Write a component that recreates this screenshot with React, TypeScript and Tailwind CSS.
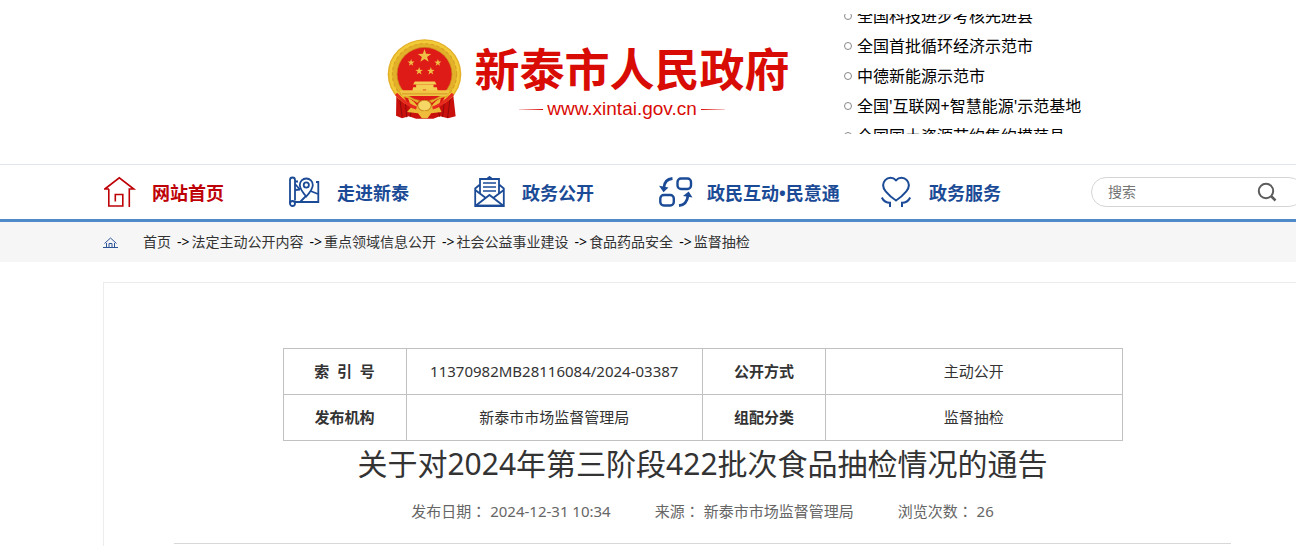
import type { ReactNode } from "react";

const honors = [
  "全国科技进步考核先进县",
  "全国首批循环经济示范市",
  "中德新能源示范市",
  "全国'互联网+智慧能源'示范基地",
  "全国国土资源节约集约模范县",
];

const crumbs = ["首页", "法定主动公开内容", "重点领域信息公开", "社会公益事业建设", "食品药品安全", "监督抽检"];

const meta = [
  { label: "发布日期", value: "2024-12-31 10:34" },
  { label: "来源", value: "新泰市市场监督管理局" },
  { label: "浏览次数", value: "26" },
];

function NavIcon({ children }: { children: ReactNode }) {
  return (
    <svg
      className="h-8 w-[34px] shrink-0"
      viewBox="0 0 34 32"
      fill="none"
      stroke="currentColor"
      strokeWidth="2"
      aria-hidden="true"
    >
      {children}
    </svg>
  );
}

const navItems = [
  {
    label: "网站首页",
    className: "w-[185px] text-[#be0007]",
    icon: (
      <g strokeWidth="1.6">
        <path d="M5 13H.8L15.3 1.8 29.8 13h-4.5v18" />
        <path d="M4.8 13v17h14V18.5h-7.5v7" />
      </g>
    ),
  },
  {
    label: "走进新泰",
    className: "w-[185px] text-[#1b4b96]",
    icon: (
      <g strokeWidth="1.8">
        <path d="M1 27.5V4a2.5 2.5 0 0 1 5 0v20.500M6 26h23.3V6H27M6 5.500h3" />
        <circle cx="3.5" cy="27.5" r="2.5" />
        <path d="M17.3 20.5c-4-4.500-6.500-8-6.500-11.500a6.500 6.500 0 0 1 13 0c0 3.500-2.500 7-6.500 11.500Z" />
        <circle cx="17.3" cy="9" r="2.6" />
        <path d="m6 8 5 5.500M6 14l5-.5M11.500 25.500l5.500-5.500M21.500 15l7.500 3" />
      </g>
    ),
  },
  {
    label: "政务公开",
    className: "w-[185px] text-[#1b4b96]",
    icon: (
      <g strokeWidth="1.8">
        <path d="M6 17V3h19v14M6 8.5 1.2 12.5V30h28.600V12.500L25 8.500M13.500 2.500l2-1.500 2 1.500" />
        <path d="m1.2 14 10 7.5M29.8 14l-10 7.500M2 29.500l13.500-10.500L29 29.500" />
        <path d="M9 7h13M9 11h13M9 15h13" strokeWidth="1.6" />
        <path d="M1 29.8h29" strokeWidth="2.4" />
      </g>
    ),
  },
  {
    label: "政民互动•民意通",
    className: "w-[222px] text-[#1b4b96]",
    icon: (
      <g strokeWidth="2.4">
        <rect x="18.5" y="2.5" width="13.5" height="10.5" rx="3.5" />
        <rect x="1.3" y="19" width="13.5" height="10.5" rx="3.5" />
        <path d="M13.5 2.500C8 3 5.200 6 4.800 12M20 29.700c5.500-.5 8.300-4 9-10" strokeWidth="2.8" />
        <path d="M0 9.800 9.500 11.500l-5 4.700ZM33.500 21.500 24 20l5.700-4.500Z" fill="currentColor" stroke="none" />
      </g>
    ),
  },
  {
    label: "政务服务",
    className: "w-[122px] text-[#1b4b96]",
    icon: (
      <g>
        <path d="M15 4.3C12 .8 7 1 4.200 4.200c-2.800 3.300-2.400 7.600.5 11.100C7.500 18.600 11 22 15 24.500c4-2.500 7.500-5.900 10.300-9.200 2.900-3.500 3.300-7.800.5-11.100C23 1 18 .8 15 4.300Z" />
        <path d="M.8 21.5c2 4 4.500 5.300 8.200 5.300V31M29.200 21.500c-2 4-4.500 5.300-8.200 5.300V31" />
      </g>
    ),
  },
];

function Star({ x, y, r }: { x: number; y: number; r: number }) {
  return (
    <path
      transform={`translate(${x} ${y}) scale(${r})`}
      d="M0-1 .23-.32.95-.31.37.12.59.81 0 .4-.59.81-.37.12-.95-.31-.23-.32Z"
      fill="#f0bf45"
    />
  );
}

function Emblem() {
  return (
    <svg className="h-[81px] w-[75px]" viewBox="21 28 224 242" aria-hidden="true">
      <path d="M49 187 81 210l104 0 33-23 8 72-23 6-24-6-20 7H108l-22-7-20 6-18-8Z" fill="#c9100d" />
      <path d="m58 198 8 62m9-51 5 53m130-60-8 62m-9-55-6 51M95 235l-5 25m82-25 6 25" stroke="#8f0b0b" strokeWidth="3" />
      <ellipse cx="133" cy="133" rx="110" ry="104" fill="#e3b02a" />
      <ellipse cx="133" cy="133" rx="101" ry="96" fill="none" stroke="#f2c936" strokeWidth="9" />
      <ellipse cx="133" cy="133" rx="96" ry="91" fill="none" stroke="#d59f24" strokeWidth="3" strokeDasharray="10 7" />
      <ellipse cx="133" cy="133" rx="82" ry="80" fill="#df1b18" stroke="#c98b1c" strokeWidth="2" />
      <Star x={133} y={79} r={21} />
      <Star x={93} y={99} r={11} />
      <Star x={173} y={99} r={11} />
      <Star x={117} y={124} r={12} />
      <Star x={152} y={124} r={12} />
      <path d="M104 155h60l5 9H99Zm4 10h52v7h-52Zm-9 7h71l3 15H96Z" fill="#f4ce52" />
      <path d="M128 187v-8h10v8" fill="#d42418" />
      <path d="M59 181h150l-8 17H66Z" fill="#f0c544" />
      <path d="M66 192h136" stroke="#c97b1a" strokeWidth="2" />
      <path d="M72 201q25 6 39 18 22-24 44 0 15-13 39-18l-16 30q-45 30-90 0Z" fill="#d91613" />
      <path d="M84 205q20 8 28 25 20-28 42 0 8-17 28-25l-6 25 8 16-31 4q-20 21-40 0l-32-4 12-14Z" fill="#ecba38" />
      <ellipse cx="133" cy="227" rx="20" ry="16" fill="#f6d665" stroke="#c98d1d" strokeWidth="3" />
      <path d="M48 192q32 34 61 42M218 192q-32 34-61 42" fill="none" stroke="#e72a1f" strokeWidth="9" />
      <path d="m115 251 18-9 19 9-10 14h-17Z" fill="#efbd3b" />
    </svg>
  );
}

function Header() {
  return (
    <header className="flex h-[164px] items-start pl-[387px]">
      <a href="#" className="flex pt-[39px] text-[#d90b05]">
        <Emblem />
        <div className="ml-3 flex w-[316px] flex-col items-center">
          <h1 className="whitespace-nowrap text-[45px] leading-[62px] font-bold">新泰市人民政府</h1>
          <div className="-mt-1 flex items-center gap-1 pr-5 font-['Liberation_Sans',sans-serif] text-[19px] leading-6">
            <span className="h-px w-6 bg-linear-to-r from-[#d90b05]/20 to-[#d90b05]" />
            www.xintai.gov.cn
            <span className="h-px w-6 bg-linear-to-l from-[#d90b05]/20 to-[#d90b05]" />
          </div>
        </div>
      </a>
      <div className="mt-3.5 ml-[54px] h-[120px] overflow-hidden">
        <ul className="-mt-[13px] text-base leading-[30px] text-black">
          {honors.map((item) => (
            <li key={item} className="flex items-center gap-[5px] whitespace-nowrap">
              <span className="size-2 rounded-full border border-[#888]" />
              {item}
            </li>
          ))}
        </ul>
      </div>
    </header>
  );
}

function Nav() {
  return (
    <nav className="border-t border-b-3 border-t-[#dfe6ee] border-b-[#4f89c8] pl-[104px]">
      <div className="-mr-2 flex h-[54px] items-center">
        {navItems.map((item) => (
          <a key={item.label} href="#" className={`flex shrink-0 items-center gap-3.5 ${item.className}`}>
            <NavIcon>{item.icon}</NavIcon>
            <span className="whitespace-nowrap pt-0.5 text-lg leading-7 font-bold">{item.label}</span>
          </a>
        ))}
        <form className="ml-auto flex h-[30px] w-[213px] shrink-0 items-center rounded-full border border-[#d5d5d5] pr-[26px] pl-4">
          <input
            type="text"
            aria-label="搜索"
            placeholder="搜索"
            className="min-w-0 flex-1 text-sm outline-none placeholder:text-[#757575]"
          />
          <button type="button" aria-label="提交搜索" className="text-[#5c5c5c]">
            <svg className="size-5" viewBox="0 0 20 20" fill="none" stroke="currentColor" strokeWidth="2">
              <circle cx="9" cy="9" r="7.2" />
              <path d="m14 14 4.5 4.5" strokeWidth="2.5" />
            </svg>
          </button>
        </form>
      </div>
    </nav>
  );
}

function Breadcrumb() {
  return (
    <div className="flex h-10 items-center bg-[#f6f6f6] pl-[103px] text-sm text-[#333]">
      <svg className="mr-[25px] h-[11px] w-[15px]" viewBox="0 0 15 11" fill="none" stroke="#2c5596" aria-hidden="true">
        <path d="M0 10.5h15M1.500 6.500 7.500 1l6 5.500M3.500 6v4.500m8 0V6M6 10.500v-4h3v4" />
      </svg>
      {crumbs.map((crumb, i) => (
        <span key={crumb} className="whitespace-nowrap">
          {i > 0 && <span className="pr-0.5 pl-1.5 text-black">-&gt;</span>}
          <a href="#">{crumb}</a>
        </span>
      ))}
    </div>
  );
}

function InfoTable() {
  const cell = "border border-[#c3c0c3] pb-0.5";
  return (
    <table className="mx-auto h-[93px] w-full max-w-[840px] table-fixed border-collapse text-center text-[15px] leading-6">
      <colgroup>
        <col className="w-[123px]" />
        <col />
        <col className="w-[123px]" />
        <col />
      </colgroup>
      <tbody>
        <tr className="h-[46px]">
          <th scope="row" className={cell}>
            <span className="whitespace-pre">索  引  号</span>
          </th>
          <td className={cell}>11370982MB28116084/2024-03387</td>
          <th scope="row" className={cell}>公开方式</th>
          <td className={cell}>主动公开</td>
        </tr>
        <tr className="h-[46px]">
          <th scope="row" className={cell}>发布机构</th>
          <td className={cell}>新泰市市场监督管理局</td>
          <th scope="row" className={cell}>组配分类</th>
          <td className={cell}>监督抽检</td>
        </tr>
      </tbody>
    </table>
  );
}

export default function App() {
  return (
    <div className="overflow-hidden bg-white font-['Noto_Sans','Noto_Sans_CJK_SC',sans-serif] text-[#333]" lang="zh-CN">
      <Header />
      <Nav />
      <Breadcrumb />
      <main className="mt-5 -mr-1.5 ml-[103px] border border-[#ececec] px-[70px] pt-[65px] pb-10">
        <InfoTable />
        <h2 className="text-center text-3xl leading-[46px]">关于对2024年第三阶段422批次食品抽检情况的通告</h2>
        <div className="flex justify-center gap-11 border-b border-[#d8d8d8] pt-3 pb-5 text-[15px] leading-6 text-[#666]">
          {meta.map((item) => (
            <span key={item.label}>
              {item.label}
              <span className="font-['Noto_Sans_CJK_TC',sans-serif]" lang="zh-TW">：</span> {item.value}
            </span>
          ))}
        </div>
      </main>
    </div>
  );
}
